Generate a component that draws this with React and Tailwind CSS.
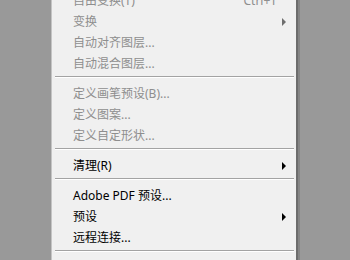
import React from "react";

const Arrow = ({ disabled }) => (
  <span
    className={
      "w-0 h-0 border-y-[4px] border-y-transparent border-l-[4px] " +
      (disabled ? "border-l-[#6e6e6e]" : "border-l-black")
    }
  />
);

const Item = ({ label, disabled, shortcut, sub }) => (
  <div className="h-[21px] flex items-center pl-[21px] pr-[10px]">
    <span className={"flex-1 whitespace-nowrap " + (disabled ? "text-[#8e8e8e]" : "text-black")}>{label}</span>
    {shortcut && <span className="text-[#8e8e8e] mr-[9px] whitespace-nowrap">{shortcut}</span>}
    {sub && <Arrow disabled={disabled} />}
  </div>
);

const Sep = () => (
  <div className="h-[9px] pt-[2px] pl-[3px] pr-[2px]">
    <div className="h-px bg-[#a3a3a3]" />
    <div className="h-px bg-white" />
  </div>
);

export default function App() {
  return (
    <div
      className="w-[350px] h-[260px] bg-[#999999] overflow-hidden flex text-[12px]"
      style={{ fontFamily: '"Noto Sans", "Noto Sans CJK SC", sans-serif' }}
    >
      <div className="w-[51px] shrink-0" />
      <div className="w-[245px] shrink-0 bg-[#f0f0f0] border-l border-[#c4c4c4]">
        <div className="-mt-[10px]">
          <Item label="自由变换(T)" disabled shortcut="Ctrl+T" />
          <Item label="变换" disabled sub />
          <Item label="自动对齐图层..." disabled />
          <Item label="自动混合图层..." disabled />
          <Sep />
          <Item label="定义画笔预设(B)..." disabled />
          <Item label="定义图案..." disabled />
          <Item label="定义自定形状..." disabled />
          <Sep />
          <Item label="清理(R)" sub />
          <Sep />
          <Item label="Adobe PDF 预设..." />
          <Item label="预设" sub />
          <Item label="远程连接..." />
          <Sep />
          <Item label="颜色设置(G)..." disabled shortcut="Shift+Ctrl+K" />
        </div>
      </div>
      <div className="w-[2px] shrink-0 bg-[#6c6c6c]" />
      <div className="w-[2px] shrink-0 bg-[#858585]" />
      <div className="flex-1" />
    </div>
  );
}
